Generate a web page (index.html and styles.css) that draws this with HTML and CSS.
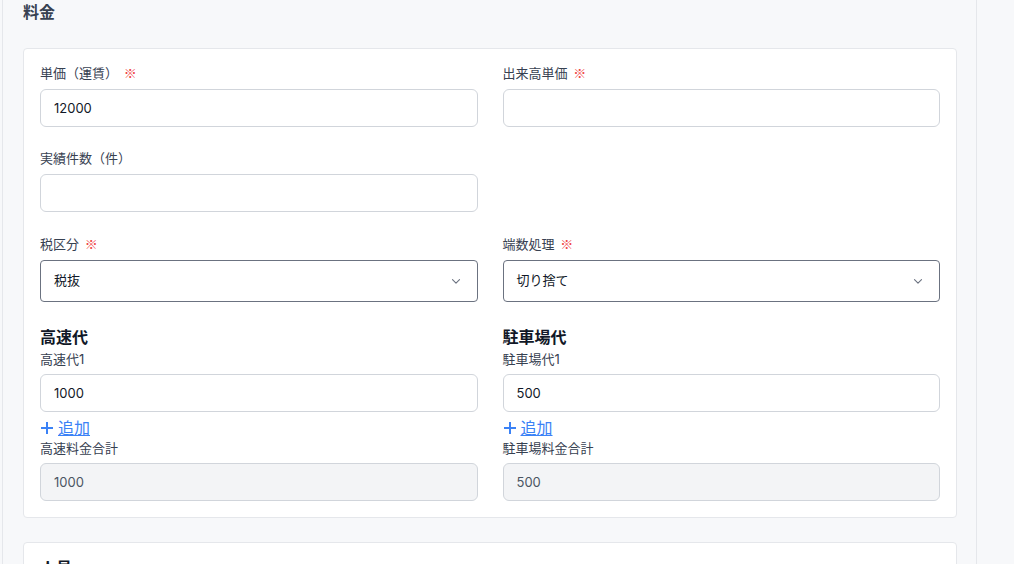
FILE: index.html
```html
<!DOCTYPE html>
<html lang="ja">
<head>
<meta charset="UTF-8">
<meta name="viewport" content="width=device-width, initial-scale=1.0">
<title>料金</title>
<link rel="stylesheet" href="styles.css">
</head>
<body>
<div class="page">
  <main class="main">
    <h2 class="section-title">料金</h2>

    <div class="card">
      <div class="grid">
        <div class="field">
          <label class="label">単価（運賃） <span class="req">※</span></label>
          <input class="input" type="text" value="12000">
        </div>
        <div class="field">
          <label class="label">出来高単価 <span class="req">※</span></label>
          <input class="input" type="text" value="">
        </div>

        <div class="field">
          <label class="label">実績件数（件）</label>
          <input class="input" type="text" value="">
        </div>
        <div class="field"></div>

        <div class="field select-field">
          <label class="label">税区分 <span class="req">※</span></label>
          <div class="select">
            <span>税抜</span>
            <svg width="14" height="14" viewBox="0 0 20 20" fill="none" stroke="#6b7280" stroke-width="1.6" stroke-linecap="round" stroke-linejoin="round"><path d="M5 8l5 5 5-5"/></svg>
          </div>
        </div>
        <div class="field select-field">
          <label class="label">端数処理 <span class="req">※</span></label>
          <div class="select">
            <span>切り捨て</span>
            <svg width="14" height="14" viewBox="0 0 20 20" fill="none" stroke="#6b7280" stroke-width="1.6" stroke-linecap="round" stroke-linejoin="round"><path d="M5 8l5 5 5-5"/></svg>
          </div>
        </div>

        <div class="group">
          <h3 class="group-title">高速代</h3>
          <label class="label sub">高速代1</label>
          <input class="input" type="text" value="1000">
          <a class="add" href="#">
            <svg width="14" height="14" viewBox="0 0 14 14" fill="none" stroke="#3b82f6" stroke-width="2"><path d="M7 1v12M1 7h12"/></svg>
            <span class="add-text">追加</span>
          </a>
          <label class="label sub">高速料金合計</label>
          <input class="input disabled" type="text" value="1000" disabled>
        </div>
        <div class="group">
          <h3 class="group-title">駐車場代</h3>
          <label class="label sub">駐車場代1</label>
          <input class="input" type="text" value="500">
          <a class="add" href="#">
            <svg width="14" height="14" viewBox="0 0 14 14" fill="none" stroke="#3b82f6" stroke-width="2"><path d="M7 1v12M1 7h12"/></svg>
            <span class="add-text">追加</span>
          </a>
          <label class="label sub">駐車場料金合計</label>
          <input class="input disabled" type="text" value="500" disabled>
        </div>
      </div>
    </div>

    <div class="card next">
      <h3 class="group-title">人員</h3>
    </div>
  </main>
</div>
</body>
</html>
```

FILE: styles.css
```css
* {
  box-sizing: border-box;
}

body {
  margin: 0;
  padding: 0;
  background-color: #f7f8fa;
  font-family: Inter, "Noto Sans CJK JP", sans-serif;
  color: #111827;
  overflow: hidden;
}

.page {
  height: 564px;
  padding-left: 2px;
}

.main {
  width: 975px;
  height: 564px;
  border-left: 1px solid #e5e7eb;
  border-right: 1px solid #e5e7eb;
  padding: 0 19px 0 20px;
  overflow: hidden;
}

.section-title {
  margin: 0;
  padding-top: 1px;
  font-size: 16px;
  line-height: 22px;
  font-weight: 700;
  color: #374151;
  height: 48px;
}

.card {
  background-color: #fff;
  border: 1px solid #e5e7eb;
  border-radius: 4px;
  padding: 14px 16px 16px 16px;
}

.card.next {
  margin-top: 24px;
  height: 60px;
}

.grid {
  display: grid;
  grid-template-columns: 1fr 1fr;
  column-gap: 25px;
  row-gap: 21px;
}

.field {
  display: flex;
  flex-direction: column;
}

.select-field {
  margin-top: 1px;
}

.label {
  font-size: 13px;
  line-height: 20px;
  color: #374151;
  margin-bottom: 6px;
  display: block;
}

.label.sub {
  margin-bottom: 5px;
}

.req {
  color: #ef4444;
  font-family: "Noto Sans CJK JP", sans-serif;
  font-size: 13px;
  margin-left: 2px;
}

.input {
  width: 100%;
  height: 38px;
  border: 1px solid #d1d5db;
  border-radius: 6px;
  padding: 0 13px;
  font-family: Inter, "Noto Sans CJK JP", sans-serif;
  font-size: 13px;
  color: #111827;
  background-color: #fff;
  outline: none;
}

.input.disabled {
  background-color: #f3f4f6;
  color: #4b5563;
}

.select {
  height: 42px;
  border: 1px solid #6b7280;
  border-radius: 4px;
  padding: 0 14px 0 13px;
  display: flex;
  align-items: center;
  justify-content: space-between;
  font-size: 13px;
  line-height: 18px;
  padding-bottom: 3px;
  color: #111827;
}

.select svg {
  margin-top: 3px;
}

.group {
  display: flex;
  flex-direction: column;
  padding-top: 3px;
}

.group-title {
  margin: 0;
  font-size: 16px;
  line-height: 23px;
  font-weight: 700;
  color: #111827;
}

.add {
  display: flex;
  align-items: center;
  gap: 4px;
  margin-top: 5px;
  height: 21px;
  color: #3b82f6;
  text-decoration: none;
  font-size: 16px;
}

.add-text {
  text-decoration: underline;
  line-height: 20px;
}
```
